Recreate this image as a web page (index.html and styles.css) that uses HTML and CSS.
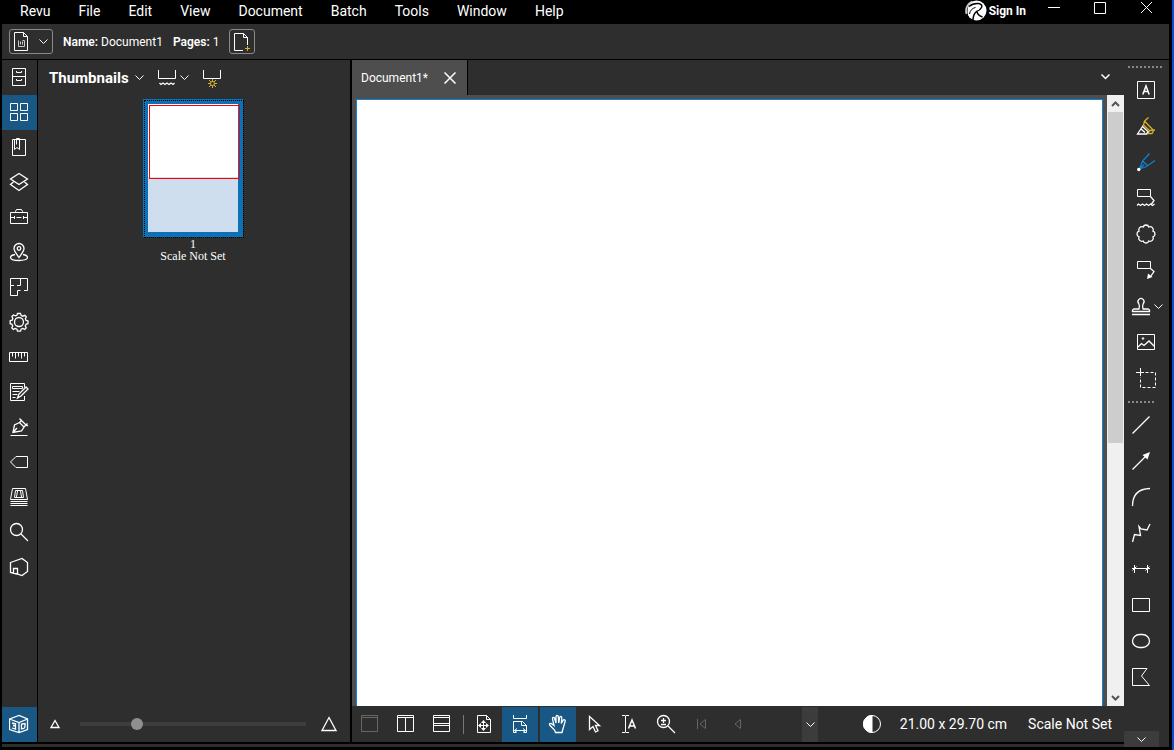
FILE: index.html
```html
<!DOCTYPE html>
<html lang="en">
<head>
<meta charset="utf-8">
<title>Revu - Document1</title>
<link rel="stylesheet" href="styles.css">
</head>
<body>
<div class="window">
  <header class="titlebar">
    <nav class="menu" aria-label="Main menu">
      <button>Revu</button><button>File</button><button>Edit</button><button>View</button><button>Document</button><button>Batch</button><button>Tools</button><button>Window</button><button>Help</button>
    </nav>
    <button class="signin">
      <svg class="logo" width="22" height="21" viewBox="0 0 22 21"><circle cx="11.500" cy="10.500" r="10" fill="#fff"/><path d="M0 0h8Q2.500 4 2.500 12Q2.500 16 5 19L0 20z" fill="#000"/><path d="M1.500 14Q-.5 6 7 1.500" fill="none" stroke="#ccc" stroke-width="1.800"/><path d="M4 6.500Q8 3 13.500 3.500Q18 4.500 16.500 7.500Q15 10.500 11.500 11.500Q8 14.500 8 20.500" fill="none" stroke="#000" stroke-width="1.500"/><path d="M12 12Q13 15.500 17.500 17" fill="none" stroke="#000" stroke-width="1.500"/><path d="M4.500 14Q5.500 8.500 10.500 7.500" fill="none" stroke="#000" stroke-width="1"/></svg>
      Sign In
    </button>
    <div class="winbuttons">
      <button aria-label="Minimize"><svg width="13" height="13" viewBox="0 0 13 13"><path d="M0 6.500h12"/></svg></button>
      <button aria-label="Maximize"><svg width="13" height="13" viewBox="0 0 13 13"><path d="M.5 1.500h11v11h-11z"/></svg></button>
      <button aria-label="Close"><svg width="13" height="13" viewBox="0 0 13 13"><path d="M1 1l11 11M12 1L1 12"/></svg></button>
    </div>
  </header>

  <div class="toolbar">
    <button class="boxed wide" aria-label="Document menu">
      <svg width="15" height="19" viewBox="0 0 15 19"><path d="M.5.5h9l4 4v14H.5zM9.500.5v4h4"/><path d="M4.500 8.500v6h6v-6h-2M6.500 12.500v-3M8.500 12.500v-3" stroke="#ccc"/></svg>
      <svg width="9" height="5" viewBox="0 0 9 5"><path d="M.5.5l4 4 4-4"/></svg>
    </button>
    <p class="fact"><b>Name:</b> Document1</p>
    <p class="fact"><b>Pages:</b> 1</p>
    <button class="boxed" aria-label="Add page">
      <svg width="18" height="20" viewBox="0 0 18 20"><path d="M10 18.500H1.500v-17h9l4 4V13M10.500 1.500v4h4"/><path d="M12 16.500h5M14.500 14v5" stroke="#d9b02c"/></svg>
    </button>
  </div>

  <main class="main">
    <nav class="rail" aria-label="Panels">
      <button aria-label="File access"><svg viewBox="0 0 21 21"><path d="M3.500 1.500h13v17h-13zM3.500 9.500h13M7.500 4v1.500h5V4M7.500 12v1.500h5V12"/></svg></button>
      <button class="on" aria-label="Thumbnails"><svg viewBox="0 0 21 21"><path d="M1.500 1.500h7v7h-7zM11.500 1.500h7v7h-7zM1.500 11.500h7v7h-7zM11.500 11.500h7v7h-7z"/></svg></button>
      <button aria-label="Bookmarks"><svg viewBox="0 0 21 21"><path d="M3.500 2.500h13v16h-13zM5.500 2.500v10l2.500-2 2.500 2v-11h-3v6"/></svg></button>
      <button aria-label="Layers"><svg class="soft" viewBox="0 0 21 21"><path d="M10 1.500l8.500 5.500-8.500 5.500L1.500 7zM4.500 10l-3 2.500L10 18.500l8.500-6-3-2.500"/></svg></button>
      <button aria-label="Tool chest"><svg viewBox="0 0 21 21"><path d="M1.500 5.500h17v11h-17zM6.500 5.500v-1l1-2h5l1 2v1M1.500 10.500h4M7.500 10.500h5M14.500 10.500h4M5.500 9v3M14.500 9v3"/></svg></button>
      <button aria-label="Places"><svg class="soft" viewBox="0 0 21 21"><path d="M10 15.500C7 11 5 9 5 6.500a5 5 0 0 1 10 0c0 2.500-2 4.500-5 9z"/><circle cx="10" cy="6.500" r="1.800"/><path d="M6 12.500c-3 .5-4.500 1.500-4.500 3 0 2 4 3 8.500 3s8.500-1 8.500-3c0-1.500-1.500-2.500-4.500-3"/></svg></button>
      <button aria-label="Spaces"><svg viewBox="0 0 21 21"><path d="M15 13.500h3.500v-12h-17v17h7v-5h3M1.500 8.500H5M8 8.500h3.500v-5M11.500 1.500V4"/></svg></button>
      <button aria-label="Properties"><svg class="soft" viewBox="0 0 21 21"><path d="M8.500 1.500h3l.7 2 1.600.7 2-.9 1.500 1.500-.9 2 .7 1.600 1.900.6v2.600l-2 .7-.7 1.600.9 2-1.500 1.500-2-.9-1.600.7-.6 2H8.500l-.6-2-1.600-.7-2 .9-1.500-1.500.9-2-.7-1.600-1.800-.6V8.700l2-.6.6-1.600-.9-2 1.500-1.500 2 .9 1.500-.6z"/><circle cx="10" cy="10" r="4.500"/></svg></button>
      <button aria-label="Measurements"><svg viewBox="0 0 21 21"><path d="M.5 5.500h18v9H.5zM3.500 6v3.500M6.500 6v5.500M9.500 6v3.500M12.500 6v5.500M15.500 6v3.500"/></svg></button>
      <button aria-label="Forms"><svg viewBox="0 0 21 21"><path d="M15.500 14v4.500h-14v-17h14v4M3.500 4.500h10v2h-10zM3.500 9.500h7M3.500 12.500h5M3.500 15.500h3"/><path class="soft" d="M8.500 16l1.500-4 7-7 2 2-7 7z"/></svg></button>
      <button aria-label="Signatures"><svg viewBox="0 0 21 21"><path d="M1.500 18.500h17"/><path class="soft" d="M4 15.500L5.500 8l5-2.500L15 10l-2.500 4zM4 15.500l4-4.500M10.500 5.500L13 3M15 10l3.500-3.500M10.500 1.500l3 3 2.500 2.500 3 2"/></svg></button>
      <button aria-label="Flags"><svg viewBox="0 0 21 21"><path d="M7 4.500h11.500v11H7L1.500 10z"/></svg></button>
      <button aria-label="Sets"><svg viewBox="0 0 21 21"><path d="M3.500 1.500h13l2 11h-17zM5.500 10.500l1-7h7l1 7zM8.500 4l-1 6M11.500 4l1 6M1.500 14.500h17M1.500 16.500h17M1.500 18.500h17"/></svg></button>
      <button aria-label="Search"><svg class="soft" viewBox="0 0 21 21"><circle cx="7.500" cy="7.500" r="6"/><path d="M12 12l7 7"/></svg></button>
      <button aria-label="Studio"><svg class="soft" viewBox="0 0 21 21"><path d="M1.500 5.500L13 1.500l5.500 4v9L13 18.500l-5-1.500-6.500-1.500zM4.500 16v-4.500h4v5"/></svg></button>
      <button class="on last" aria-label="3D model tree"><svg class="soft" viewBox="0 0 21 21"><path d="M.5 5L10 1.500 18.500 5v10.500L10 18.500.5 15.500zM.5 5L10 8.500 18.500 5M10 8.500v10M3 9l3.500.8v2L4 11.500l2.500.6v3L3 14M12.500 10v5l2.500-.7 1-1.500V9.500z"/></svg></button>
    </nav>

    <section class="panel">
      <div class="panel-head">
        <h2>Thumbnails</h2>
        <button class="gap-s" aria-label="Panel list"><svg width="9" height="5" viewBox="0 0 9 5"><path d="M.5.5l4 4 4-4"/></svg></button>
        <button class="gap-m" aria-label="Thumbnail options">
          <svg width="18" height="20" viewBox="0 0 18 20"><path d="M.5 2v8.500h17V2"/><path class="soft" d="M1.500 15l1.500 1.500L5 15l2 1.500L9 15l2 1.500 2-1.500 2 1.500 1.500-1.500"/></svg>
          <svg width="9" height="5" viewBox="0 0 9 5"><path d="M.5.5l4 4 4-4"/></svg></button>
        <button class="gap-m" aria-label="New thumbnail view">
          <svg width="18" height="20" viewBox="0 0 18 20"><path d="M.5 2v8.500h17V2"/><g stroke="#d9b02c"><circle cx="9.500" cy="15.500" r="2"/><path d="M9.500 11v2.500M9.500 17.500V20M5 15.500h2.500M11.500 15.500H14M6 12l2 2M13 12l-2 2M6 19l2-2M13 19l-2-2"/></g></svg></button>
      </div>
      <figure class="thumb">
        <div class="sheet"><div class="seen"></div></div>
        <figcaption>1<br>Scale Not Set</figcaption>
      </figure>
      <div class="zoomrow">
        <svg class="soft" width="10" height="10" viewBox="0 0 10 10"><path d="M5 1.500L9 8.500H1z"/></svg>
        <input type="range" min="0" max="100" value="24" aria-label="Thumbnail size">
        <svg class="soft" width="16" height="16" viewBox="0 0 16 16"><path d="M8 1.500l7 13H1z"/></svg>
      </div>
    </section>

    <section class="doc">
      <div class="tabs">
        <div class="tab"><span>Document1*</span><button aria-label="Close tab"><svg width="12" height="12" viewBox="0 0 12 12"><path d="M.5.5l11 11M11.500.5L.5 11.500"/></svg></button></div>
        <button class="tablist" aria-label="Tab list"><svg width="9" height="6" viewBox="0 0 9 6"><path d="M.5.5l4 4 4-4"/></svg></button>
      </div>
      <div class="view">
        <div class="page"></div>
        <div class="scroll">
          <button aria-label="Scroll up"><svg width="9" height="6" viewBox="0 0 9 6"><path d="M1 5l3.500-3.500L8 5"/></svg></button>
          <div class="grip"></div>
          <div class="rest"></div>
          <button aria-label="Scroll down"><svg width="9" height="6" viewBox="0 0 9 6"><path d="M1 1l3.500 3.500L8 1"/></svg></button>
        </div>
      </div>
      <div class="status">
        <button class="dim" aria-label="Unsplit"><svg viewBox="0 0 20 20"><path d="M1.500 1.500h16v16h-16zM1.500 3.500h16"/></svg></button>
        <button aria-label="Split vertical"><svg viewBox="0 0 20 20"><path d="M1.500 1.500h16v16h-16zM1.500 3.500h16M9.500 3.500v14"/></svg></button>
        <button aria-label="Split horizontal"><svg viewBox="0 0 20 20"><path d="M1.500 1.500h16v16h-16zM1.500 3.500h16M1.500 9.500h16M1.500 11.500h16"/></svg></button>
        <i class="sep"></i>
        <button aria-label="Fit page"><svg viewBox="0 0 20 20"><path d="M3.500 1.500h9l4 4v13h-13zM12.500 1.500v4h4M9.500 7v9M5 11.500h9"/><path d="M9.500 6l2.500 3H7zM9.500 17l2.500-3H7zM4 11.500L7 9v5zM15 11.500L12 9v5z" fill="#fff" stroke="none"/></svg></button>
        <button class="on" aria-label="Fit width"><svg viewBox="0 0 20 20"><path d="M3.500 1v3.500h13V1M6 18.500H3.500v-11h9l4 4v7H14M11.500 7.500v4h5M4.500 16.500h11M7 14.500l-2.500 2 2.500 2M13 14.500l2.500 2-2.500 2"/></svg></button>
        <button class="on spaced" aria-label="Pan"><svg class="soft" viewBox="0 0 20 20"><path d="M7.500 18.500L6.500 16 2 11.500c-1.500-1.500.5-3 2-1.500l2 1.500L4.500 5c-.3-2 1.700-2.300 2.200-.5L8 9V3c0-2 2.300-2 2.400 0l.3 6 1-5.500c.4-1.800 2.300-1.500 2.100.5L13.300 9.500l1.700-3c.9-1.500 2.800-.7 2.100 1l-2.300 8-.8 3z"/></svg></button>
        <button aria-label="Select"><svg class="soft" viewBox="0 0 20 20"><path d="M5.500 2.500v13l3.500-3 2.500 5.500 2.500-1.200-2.500-5.300h4z"/></svg></button>
        <button aria-label="Select text"><svg viewBox="0 0 20 20"><path d="M2 1.500h3M6 1.500h3M2 18.500h3M6 18.500h3M5.500 1.500v17"/><path d="M8.500 14.500L12 6l3.500 8.500M9.500 12h5" stroke-width="1.500"/></svg></button>
        <button aria-label="Zoom"><svg class="soft" viewBox="0 0 20 20"><circle cx="7.500" cy="7.500" r="6"/><path d="M12 12l7 7M5 6.500h5M7.500 4v5M5 10.500h5"/></svg></button>
        <button class="dim" aria-label="First page"><svg viewBox="0 0 20 20"><path d="M5.500 5v10M13.500 5.500v9L8 10z"/></svg></button>
        <button class="dim" aria-label="Previous page"><svg viewBox="0 0 20 20"><path d="M12.500 5.500v9L7 10z"/></svg></button>
        <button class="drop" aria-label="Page list"><svg width="9" height="5" viewBox="0 0 9 5"><path d="M.5.5l4 4 4-4"/></svg></button>
        <button class="dimmer" aria-label="Dimmer"><svg viewBox="0 0 20 20"><circle cx="10" cy="10" r="8.500"/><path d="M10 1.500a8.500 8.500 0 0 0 0 17z" fill="#fff"/></svg></button>
        <span class="size">21.00 x 29.70 cm</span>
        <span>Scale Not Set</span>
      </div>
    </section>
  </main>

  <aside class="tools" aria-label="Markup tools">
    <div class="dots"></div>
    <div class="set first">
      <button aria-label="Text box"><svg viewBox="0 0 20 20"><path d="M1.500 1.500h17v17h-17z"/><path d="M6.800 14.500L10 6l3.200 8.500M8 11.500h4" stroke-width="1.500"/></svg></button>
      <button aria-label="Highlight"><svg class="soft" viewBox="0 0 20 20"><path d="M12.500 1.500L8.500 5l-1 4 6 5.500 5.500-.5M8.500 5l9 9.500M7.500 9l-1 1M13.500 14.500l-1.500 3h4l1.500-2.500" stroke="#d9b02c"/><path d="M6.500 10.500L1.500 18h9l1.500-2.500zM5 13l4 3.500"/></svg></button>
      <button aria-label="Pen"><svg class="soft" viewBox="0 0 20 20"><path d="M13.500 1.500L6.500 9l-3 8M19 8.500l-8.500 6-7 2.500M6.500 9l5.500 5M4 16.500l4-4" stroke="#0f82d2"/><circle cx="2.800" cy="17.500" r="1.700" fill="#fff" stroke="none"/></svg></button>
      <button aria-label="Text cloud"><svg viewBox="0 0 20 20"><path d="M1.500 1.500h13v7h-13z"/><path class="soft" d="M14.500 8.500l3.500 4-2.500 3.500M1 17.500l1.500-1.500 2 1.500 2-1.500 2 1.500 2-1.500 2 1.500 2-1.500 2 1.500 2-1.500"/></svg></button>
      <button aria-label="Cloud"><svg class="soft" viewBox="0 0 20 20"><path d="M7.100 3a3.100 3.100 0 0 1 5.800 0a3.100 3.100 0 0 1 4.100 4.100a3.100 3.100 0 0 1 0 5.800a3.100 3.100 0 0 1-4.100 4.100a3.100 3.100 0 0 1-5.800 0a3.100 3.100 0 0 1-4.100-4.100a3.100 3.100 0 0 1 0-5.800a3.100 3.100 0 0 1 4.100-4.100z"/></svg></button>
      <button aria-label="Callout"><svg viewBox="0 0 20 20"><path d="M1.500 1.500h13v7h-13z"/><path class="soft" d="M14.500 8.500l3.500 3-3.500 5"/><path d="M11 19l1-5.500 4.500 3.500z" fill="#fff" stroke="none"/></svg></button>
      <button class="stamp" aria-label="Stamp"><svg class="soft" viewBox="0 0 20 20"><path d="M8 13c1-2.500.5-4-.3-5.500a3 3 0 1 1 4.600 0C11.500 9 11 10.500 12 13h5l1.500 1v1.500h-17V14l1.500-1zM1 18.500h18"/></svg><svg class="chev" viewBox="0 0 9 5"><path d="M.5.5l4 4 4-4"/></svg></button>
      <button aria-label="Image"><svg viewBox="0 0 20 20"><path d="M1.500 2.500h17v15h-17z"/><path class="soft" d="M2 15l3.500-3.500 2.500 2L13 9l5.500 5.500"/><circle cx="7" cy="6.500" r=".8" fill="#fff"/></svg></button>
      <button aria-label="Snapshot"><svg viewBox="0 0 20 20"><path d="M0 4.500h8M4.500 0v8"/><path d="M9.500 4.500h10v15h-15V9" stroke-dasharray="3 2"/></svg></button>
    </div>
    <div class="dots short"></div>
    <div class="set">
      <button aria-label="Line"><svg class="soft" viewBox="0 0 20 20"><path d="M1.500 18.500l17-17"/></svg></button>
      <button aria-label="Arrow"><svg class="soft" viewBox="0 0 20 20"><path d="M1.500 18.500L15 5"/><path d="M19 1l-2.500 7.500-5-4.500z" fill="#fff" stroke="none"/></svg></button>
      <button aria-label="Arc"><svg class="soft" viewBox="0 0 20 20"><path d="M1.500 19Q1.500 2 19 1.500"/></svg></button>
      <button aria-label="Polyline"><svg class="soft" viewBox="0 0 20 20"><path d="M1.500 19l2-7.500 6 1L8 3.500l2 2.500 6 1 3-6"/></svg></button>
      <button aria-label="Dimension"><svg viewBox="0 0 20 20"><path d="M3.500 6v8M16.500 6v8M1 9.500h18M1.500 11.500l4-4M14.500 11.500l4-4"/></svg></button>
      <button aria-label="Rectangle"><svg viewBox="0 0 20 20"><path d="M1.500 3.500h17v13h-17z"/></svg></button>
      <button aria-label="Ellipse"><svg class="soft" viewBox="0 0 20 20"><rect x="1.500" y="3.500" width="17" height="13" rx="7" ry="6.500"/></svg></button>
      <button aria-label="Polygon"><svg viewBox="0 0 20 20"><path d="M1.500 1.500h14.500l-5.500 7.500 8 9.500h-17z"/></svg></button>
    </div>
    <button class="more" aria-label="More tools"><svg width="9" height="5" viewBox="0 0 9 5"><path d="M.5.5l4 4 4-4"/></svg></button>
  </aside>
</div>
</body>
</html>
```
FILE: styles.css
```css
* { box-sizing: border-box; }
body {
  margin: 0;
  background: #000;
  color: #fff;
  font: 14px/20px Roboto, sans-serif;
}
button {
  display: flex;
  align-items: center;
  justify-content: center;
  margin: 0;
  padding: 0;
  border: 0;
  background: none;
  color: inherit;
  font: inherit;
}
svg { display: block; flex: none; fill: none; stroke: #fff; stroke-width: 1; }
.soft { stroke-width: 1.3; }
p, h2, figure { margin: 0; }

.window {
  display: grid;
  grid-template-columns: 1fr 45px;
  grid-template-rows: 24px 35px 1fr;
  height: 100vh;
  padding: 0 3px 3px 2px;
  border-right: 2px solid #0a4fd0;
}

.titlebar { grid-column: 1 / 3; display: flex; align-items: flex-start; }
.menu { display: flex; gap: 28px; padding: 1px 0 0 18px; flex: 1; }
.signin { gap: 2px; margin-right: 22px; font-size: 12px; font-weight: 700; }
.logo { stroke: none; }
.winbuttons { display: flex; gap: 33px; padding: 1px 16px 0 0; }

.toolbar {
  grid-column: 1 / 3;
  display: flex;
  align-items: center;
  gap: 10px;
  padding-left: 7px;
  background: #2e2e2e;
  font-size: 12px;
}
.toolbar .fact b { font-weight: 600; }
.boxed { width: 26px; height: 25px; border: 1px solid #8a8a8a; border-radius: 3px; }
.boxed.wide { width: 44px; gap: 10px; }

.main {
  display: grid;
  grid-template-columns: 35px 312px 1fr;
  column-gap: 1px;
  margin-top: 1px;
  min-height: 0;
  border-bottom: 3px solid #2e2e2e;
}
.rail, .panel, .doc { margin-bottom: 2px; min-height: 0; }
.rail { display: flex; flex-direction: column; background: #2e2e2e; }
.rail button { height: 35px; }
.rail svg { width: 21px; height: 21px; }
.rail .last { margin-top: auto; }
.on { background: #195884; }

.panel { display: flex; flex-direction: column; background: #2e2e2e; }
.panel-head { display: flex; align-items: center; height: 35px; padding-left: 11px; }
.panel-head h2 { font-size: 15px; line-height: 20px; font-weight: 700; }
.panel-head button { gap: 4px; }
.panel-head .gap-s { margin-left: 6px; }
.panel-head .gap-m { margin-left: 14px; }

.thumb { margin-top: 4px; padding-right: 2px; text-align: center; }
.sheet {
  position: relative;
  width: 100px;
  height: 138px;
  margin: 0 auto;
  border: 5px solid #0b72b8;
  background: linear-gradient(#fff 73px, #cfdeef 73px);
}
.sheet::after { content: ""; position: absolute; inset: -4px -6px -6px -4px; border: 1px dotted #000; }
.seen { position: absolute; top: 1px; left: 1px; width: 91px; height: 74px; border: 1px solid #f00; }
.thumb figcaption { margin-top: 1px; font: 12px/12px "Liberation Serif", serif; }

.zoomrow { display: flex; align-items: center; height: 36px; margin-top: auto; padding: 0 13px 0 12px; }
.zoomrow input {
  flex: 1;
  min-width: 0;
  height: 12px;
  margin: 0 15px 0 20px;
  appearance: none;
  background: linear-gradient(#3d3d3d, #3d3d3d) center / 100% 4px no-repeat;
}
.zoomrow input::-webkit-slider-thumb {
  appearance: none;
  width: 12px;
  height: 12px;
  border-radius: 50%;
  background: #8f8f8f;
}

.doc { display: flex; flex-direction: column; margin-left: 1px; background: #2e2e2e; }
.tabs { display: flex; justify-content: space-between; height: 35px; }
.tab {
  display: flex;
  align-items: center;
  gap: 16px;
  padding: 0 11px 0 9px;
  border-right: 1px solid #000;
  background: #4e4e4e;
  font-size: 12px;
}
.tab svg { stroke-width: 1.5; }
.tablist { width: 38px; height: 33px; }
.tablist svg { stroke-width: 1.5; }
.view { display: flex; flex: 1; min-height: 0; background: #4e4e4e; }
.page { flex: 1; margin: 4px 4px 0; border: 1px solid #0f82d2; border-bottom: 0; background: #fff; }
.scroll { display: flex; flex-direction: column; width: 17px; background: #f0f0f0; }
.scroll button { height: 17px; }
.scroll svg { stroke: #555; stroke-width: 2; }
.grip { flex: 331; margin: 0 1px; background: #cdcdcd; }
.rest { flex: 246; }

.status { display: flex; height: 36px; align-items: center; }
.status button { width: 36px; height: 35px; }
.status svg { width: 20px; height: 20px; }
.status .dim svg { stroke: #666; }
.status .spaced { margin-left: 2px; }
.status .sep { width: 1px; height: 19px; margin: 0 2px 0 3px; background: #777; }
.status .drop { width: 16px; margin-left: 46px; background: #3c3c3c; }
.status .drop svg { width: 9px; height: 5px; }
.status .dimmer { width: 20px; margin: 0 18px 0 auto; }
.status .size { margin-right: 21px; }
.status span:last-child { margin-right: 12px; }

.tools { display: flex; flex-direction: column; margin-top: 1px; background: #2e2e2e; }
.dots {
  width: 35px;
  height: 2px;
  margin: 6px 0 4px 4px;
  background: repeating-linear-gradient(90deg, #888 0 2px, transparent 2px 4px);
}
.dots.short { width: 27px; margin: 5px 0 4px 4px; }
.set button { width: 45px; height: 36px; justify-content: flex-start; padding-left: 7px; }
.set svg { width: 20px; height: 20px; }
.set.first button { padding-left: 12px; }
.set.first .stamp { gap: 3px; padding-left: 7px; }
.set .chev { width: 9px; height: 5px; }
.more { width: 35px; height: 16px; margin-top: auto; background: #3c3c3c; }
```
